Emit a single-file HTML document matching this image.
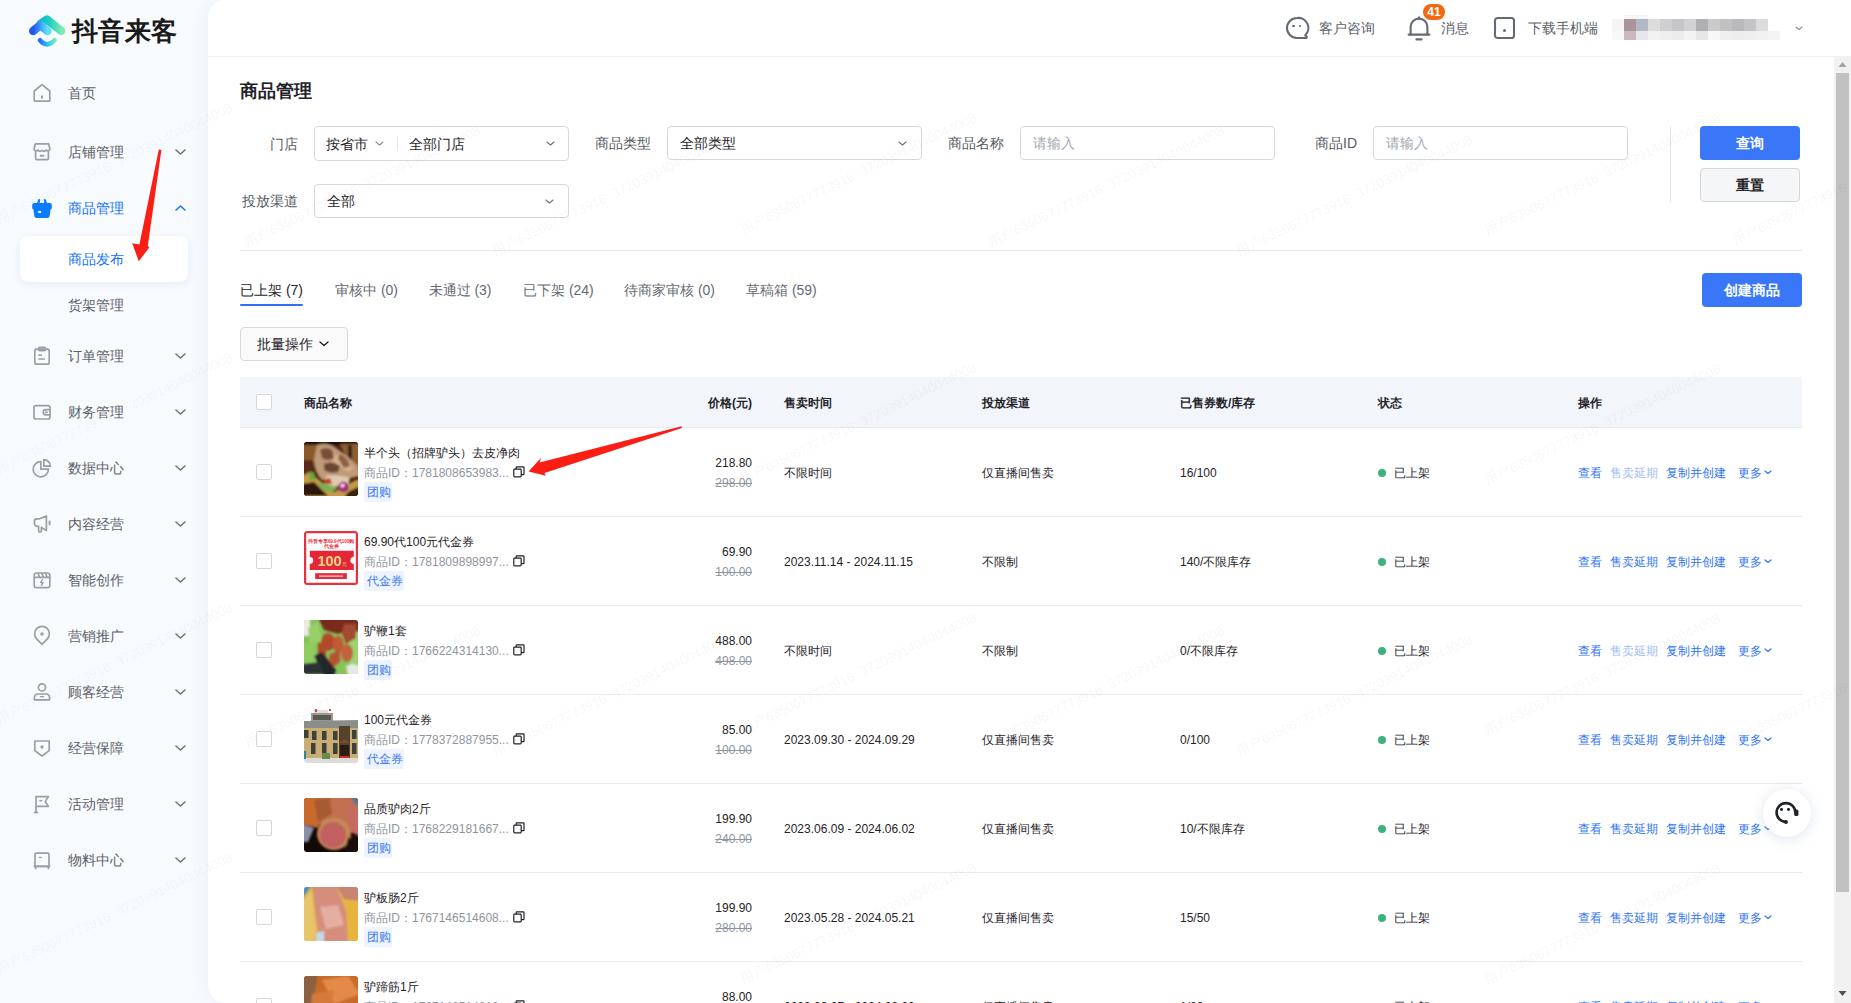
<!DOCTYPE html><html><head><meta charset="utf-8"><style>
*{margin:0;padding:0;box-sizing:border-box}
html,body{width:1851px;height:1003px;overflow:hidden}
body{position:relative;background:#f8fbfe;font-family:"Liberation Sans",sans-serif;color:#1f2329}
.t{position:absolute;white-space:nowrap}
.a{position:absolute}
#main{position:absolute;left:208px;top:0;width:1643px;height:1003px;background:#fff;border-radius:18px 0 0 18px;box-shadow:-4px 0 20px rgba(215,230,245,.3)}
</style></head><body>
<svg class="a" style="left:24px;top:10px" width="48" height="42" viewBox="24 10 48 42">
<defs>
<linearGradient id="lg1" x1="0" y1="0" x2="1" y2="0"><stop offset="0" stop-color="#12b8d0"/><stop offset=".45" stop-color="#20cfc0"/><stop offset="1" stop-color="#7de8b8"/></linearGradient>
<linearGradient id="lg2" x1="0" y1="0" x2="1" y2="0"><stop offset="0" stop-color="#1f55f0"/><stop offset=".5" stop-color="#3a9cff"/><stop offset="1" stop-color="#5ee0f5"/></linearGradient>
<linearGradient id="lg3" x1="0" y1="0" x2="1" y2="0"><stop offset="0" stop-color="#2a6cf8"/><stop offset=".55" stop-color="#33c2fa"/><stop offset="1" stop-color="#78e8bc"/></linearGradient>
</defs>
<path d="M40.5 24 L47 19.6 L61.2 30.8" fill="none" stroke="url(#lg1)" stroke-width="8.4" stroke-linecap="round" stroke-linejoin="round"/>
<path d="M33.2 31 L40.5 25 L47.5 31" fill="none" stroke="url(#lg2)" stroke-width="8.4" stroke-linecap="round" stroke-linejoin="round"/>
<path d="M40 40.3 Q47 48.5 54.5 40.3" fill="none" stroke="url(#lg3)" stroke-width="4.6" stroke-linecap="round"/>
</svg>
<div class="t" style="top:16.0px;font-size:26px;line-height:30px;color:#1a1a1a;font-weight:bold;left:72px;letter-spacing:0.3px;">抖音来客</div>
<div class="a" style="left:20px;top:236px;width:168px;height:46px;background:#fff;border-radius:8px;box-shadow:0 2px 8px rgba(180,200,225,.28)"></div>
<svg class="a" style="left:31px;top:82px" width="22" height="22" viewBox="0 0 22 22" fill="none" stroke="#9a9ea6" stroke-width="1.7" stroke-linecap="round" stroke-linejoin="round"><path d="M3.2 9 L11 2.6 L18.8 9 V18.2 a1 1 0 0 1-1 1 H4.2 a1 1 0 0 1-1-1 Z"/><path d="M11 14.2 v1.6" stroke-width="2"/></svg>
<div class="t" style="top:83.0px;font-size:14px;line-height:20px;color:#5c6169;left:68px;">首页</div>
<svg class="a" style="left:31px;top:141px" width="22" height="22" viewBox="0 0 22 22" fill="none" stroke="#9a9ea6" stroke-width="1.7" stroke-linecap="round" stroke-linejoin="round"><path d="M4.4 2.8 H17.6 L19 8 Q17.7 10.8 15.3 9.2 Q13.2 11.2 11 9.4 Q8.8 11.2 6.7 9.2 Q4.3 10.8 3 8 Z"/><path d="M4.6 10.6 V17.6 a1 1 0 0 0 1 1 H16.4 a1 1 0 0 0 1-1 V10.6"/><path d="M9.6 14.8 h2.8" stroke-width="2"/></svg>
<div class="t" style="top:142.0px;font-size:14px;line-height:20px;color:#5c6169;left:68px;">店铺管理</div>
<svg class="a" style="left:175.0px;top:149.0px" width="11" height="6.5"><path d="M1 1 L5.5 5.0 L10 1" fill="none" stroke="#6b7078" stroke-width="1.5" stroke-linecap="round" stroke-linejoin="round"/></svg>
<svg class="a" style="left:31px;top:197px" width="22" height="22" viewBox="0 0 22 22"><path fill="#0a7cff" d="M1.2 8 a2 2 0 0 1 2-2 H5.9 L7.3 2.6 a1 1 0 0 1 1.9 .5 L8.7 6 H13.3 L12.8 3.1 a1 1 0 0 1 1.9-.5 L16.1 6 H18.8 a2 2 0 0 1 2 2 V11.4 L19.6 12.6 L18.7 18.8 a2.4 2.4 0 0 1-2.4 2.2 H5.7 a2.4 2.4 0 0 1-2.4-2.2 L2.4 12.6 L1.2 11.4 Z"/><rect x="7" y="14" width="3.2" height="2" rx=".7" fill="#fff"/></svg>
<div class="t" style="top:198.0px;font-size:14px;line-height:20px;color:#1170ff;left:68px;">商品管理</div>
<svg class="a" style="left:175.0px;top:205.0px" width="11" height="6.5"><path d="M1 5.0 L5.5 1 L10 5.0" fill="none" stroke="#1170ff" stroke-width="1.5" stroke-linecap="round" stroke-linejoin="round"/></svg>
<div class="t" style="top:249.0px;font-size:14px;line-height:20px;color:#1170ff;left:68px;">商品发布</div>
<div class="t" style="top:295.0px;font-size:14px;line-height:20px;color:#5c6169;left:68px;">货架管理</div>
<svg class="a" style="left:31px;top:345px" width="22" height="22" viewBox="0 0 22 22" fill="none" stroke="#9a9ea6" stroke-width="1.7" stroke-linecap="round" stroke-linejoin="round"><rect x="3.8" y="4.2" width="14.4" height="15" rx="2"/><rect x="7.6" y="2.4" width="6.8" height="3.2" rx="1.2"/><path d="M8 10.2 h2.2 M8 14 h5.2"/></svg>
<div class="t" style="top:346.0px;font-size:14px;line-height:20px;color:#5c6169;left:68px;">订单管理</div>
<svg class="a" style="left:175.0px;top:353.0px" width="11" height="6.5"><path d="M1 1 L5.5 5.0 L10 1" fill="none" stroke="#6b7078" stroke-width="1.5" stroke-linecap="round" stroke-linejoin="round"/></svg>
<svg class="a" style="left:31px;top:401px" width="22" height="22" viewBox="0 0 22 22" fill="none" stroke="#9a9ea6" stroke-width="1.7" stroke-linecap="round" stroke-linejoin="round"><rect x="3" y="4.6" width="16" height="13.4" rx="2"/><path d="M19 8.6 h-4.2 a2.6 2.6 0 0 0 0 5.2 H19"/><path d="M15 11.2 h.8" stroke-width="2"/></svg>
<div class="t" style="top:402.0px;font-size:14px;line-height:20px;color:#5c6169;left:68px;">财务管理</div>
<svg class="a" style="left:175.0px;top:409.0px" width="11" height="6.5"><path d="M1 1 L5.5 5.0 L10 1" fill="none" stroke="#6b7078" stroke-width="1.5" stroke-linecap="round" stroke-linejoin="round"/></svg>
<svg class="a" style="left:31px;top:457px" width="22" height="22" viewBox="0 0 22 22" fill="none" stroke="#9a9ea6" stroke-width="1.7" stroke-linecap="round" stroke-linejoin="round"><path d="M9.8 4.6 A7.6 7.6 0 1 0 17.4 12.2 H9.8 Z"/><path d="M12.8 2.6 V9.2 H19.4 A6.8 6.8 0 0 0 12.8 2.6 Z"/></svg>
<div class="t" style="top:458.0px;font-size:14px;line-height:20px;color:#5c6169;left:68px;">数据中心</div>
<svg class="a" style="left:175.0px;top:465.0px" width="11" height="6.5"><path d="M1 1 L5.5 5.0 L10 1" fill="none" stroke="#6b7078" stroke-width="1.5" stroke-linecap="round" stroke-linejoin="round"/></svg>
<svg class="a" style="left:31px;top:513px" width="22" height="22" viewBox="0 0 22 22" fill="none" stroke="#9a9ea6" stroke-width="1.7" stroke-linecap="round" stroke-linejoin="round"><path d="M3.4 8.2 a2.4 2.4 0 0 1 2.4-2.4 H8.6 L15.4 3 V17.4 L10.4 14.4 V17.8 a1.4 1.4 0 0 1-2.8 0 V13.2 a3.2 3.2 0 0 1-4.2-3 Z"/><path d="M18.6 8.4 V11.6" stroke-width="1.9"/></svg>
<div class="t" style="top:514.0px;font-size:14px;line-height:20px;color:#5c6169;left:68px;">内容经营</div>
<svg class="a" style="left:175.0px;top:521.0px" width="11" height="6.5"><path d="M1 1 L5.5 5.0 L10 1" fill="none" stroke="#6b7078" stroke-width="1.5" stroke-linecap="round" stroke-linejoin="round"/></svg>
<svg class="a" style="left:31px;top:569px" width="22" height="22" viewBox="0 0 22 22" fill="none" stroke="#9a9ea6" stroke-width="1.7" stroke-linecap="round" stroke-linejoin="round"><rect x="3.2" y="4" width="15.6" height="14.6" rx="2.2"/><path d="M3.4 8.4 H18.6 M7 4.2 L8.6 8.2 M10.8 4.2 L12.4 8.2 M14.6 4.2 L16.2 8.2"/><path d="M11.6 10.4 L9.6 13.6 H12.2 L10.4 16.4" stroke-width="1.3"/></svg>
<div class="t" style="top:570.0px;font-size:14px;line-height:20px;color:#5c6169;left:68px;">智能创作</div>
<svg class="a" style="left:175.0px;top:577.0px" width="11" height="6.5"><path d="M1 1 L5.5 5.0 L10 1" fill="none" stroke="#6b7078" stroke-width="1.5" stroke-linecap="round" stroke-linejoin="round"/></svg>
<svg class="a" style="left:31px;top:625px" width="22" height="22" viewBox="0 0 22 22" fill="none" stroke="#9a9ea6" stroke-width="1.7" stroke-linecap="round" stroke-linejoin="round"><path d="M11 19.4 L5.6 13.8 A7.4 7.4 0 1 1 16.4 13.8 Z"/><circle cx="11" cy="9" r=".9" fill="#9a9ea6"/></svg>
<div class="t" style="top:626.0px;font-size:14px;line-height:20px;color:#5c6169;left:68px;">营销推广</div>
<svg class="a" style="left:175.0px;top:633.0px" width="11" height="6.5"><path d="M1 1 L5.5 5.0 L10 1" fill="none" stroke="#6b7078" stroke-width="1.5" stroke-linecap="round" stroke-linejoin="round"/></svg>
<svg class="a" style="left:31px;top:681px" width="22" height="22" viewBox="0 0 22 22" fill="none" stroke="#9a9ea6" stroke-width="1.7" stroke-linecap="round" stroke-linejoin="round"><circle cx="11" cy="6.4" r="3.6"/><path d="M3.4 18.8 V16.4 a3.4 3.4 0 0 1 3.4-3.4 H15.2 a3.4 3.4 0 0 1 3.4 3.4 V18.8 Z"/><path d="M9.4 15.6 h3.2" stroke-width="1.4"/></svg>
<div class="t" style="top:682.0px;font-size:14px;line-height:20px;color:#5c6169;left:68px;">顾客经营</div>
<svg class="a" style="left:175.0px;top:689.0px" width="11" height="6.5"><path d="M1 1 L5.5 5.0 L10 1" fill="none" stroke="#6b7078" stroke-width="1.5" stroke-linecap="round" stroke-linejoin="round"/></svg>
<svg class="a" style="left:31px;top:737px" width="22" height="22" viewBox="0 0 22 22" fill="none" stroke="#9a9ea6" stroke-width="1.7" stroke-linecap="round" stroke-linejoin="round"><path d="M3.8 4 H18.2 V13.6 L11 19 L3.8 13.6 Z"/><circle cx="11" cy="10" r=".8" fill="#9a9ea6"/></svg>
<div class="t" style="top:738.0px;font-size:14px;line-height:20px;color:#5c6169;left:68px;">经营保障</div>
<svg class="a" style="left:175.0px;top:745.0px" width="11" height="6.5"><path d="M1 1 L5.5 5.0 L10 1" fill="none" stroke="#6b7078" stroke-width="1.5" stroke-linecap="round" stroke-linejoin="round"/></svg>
<svg class="a" style="left:31px;top:793px" width="22" height="22" viewBox="0 0 22 22" fill="none" stroke="#9a9ea6" stroke-width="1.7" stroke-linecap="round" stroke-linejoin="round"><path d="M5 19.6 V3.6 H17.4 L14.2 8.6 L17.4 13.4 H5"/><path d="M3.6 19.4 h2.8"/><path d="M8.8 7.8 h1.8" stroke-width="1.4"/></svg>
<div class="t" style="top:794.0px;font-size:14px;line-height:20px;color:#5c6169;left:68px;">活动管理</div>
<svg class="a" style="left:175.0px;top:801.0px" width="11" height="6.5"><path d="M1 1 L5.5 5.0 L10 1" fill="none" stroke="#6b7078" stroke-width="1.5" stroke-linecap="round" stroke-linejoin="round"/></svg>
<svg class="a" style="left:31px;top:849px" width="22" height="22" viewBox="0 0 22 22" fill="none" stroke="#9a9ea6" stroke-width="1.7" stroke-linecap="round" stroke-linejoin="round"><path d="M4 17.4 V5.4 a1.2 1.2 0 0 1 1.2-1.2 H16.8 a1.2 1.2 0 0 1 1.2 1.2 V17.4 Z"/><path d="M4.6 17.6 V19.4 M17.4 17.6 V19.4 M3.4 17.4 H18.6"/><path d="M8.4 8.4 h2" stroke-width="1.4"/></svg>
<div class="t" style="top:850.0px;font-size:14px;line-height:20px;color:#5c6169;left:68px;">物料中心</div>
<svg class="a" style="left:175.0px;top:857.0px" width="11" height="6.5"><path d="M1 1 L5.5 5.0 L10 1" fill="none" stroke="#6b7078" stroke-width="1.5" stroke-linecap="round" stroke-linejoin="round"/></svg>
<div id="main"></div>
<div class="a" style="left:208px;top:56px;width:1643px;height:1px;background:#eef0f2"></div>
<svg class="a" style="left:1284px;top:15px" width="26" height="26" viewBox="0 0 26 26" fill="none" stroke="#646a73" stroke-width="2.1" stroke-linecap="round" stroke-linejoin="round">
<path d="M13 3 A10 10 0 1 0 13 23 H22.6 V21.6 L21.2 20.2 A10 10 0 0 0 13 3 Z"/></svg>
<div class="a" style="left:1292.4px;top:24.6px;width:2.6px;height:2.6px;border-radius:50%;background:#646a73"></div>
<div class="a" style="left:1298.8px;top:24.6px;width:2.6px;height:2.6px;border-radius:50%;background:#646a73"></div>
<div class="t" style="top:17.5px;font-size:14px;line-height:20px;color:#5c6169;left:1319px;">客户咨询</div>
<svg class="a" style="left:1406px;top:14px" width="26" height="28" viewBox="0 0 26 28" fill="none" stroke="#646a73" stroke-width="2.1" stroke-linecap="round" stroke-linejoin="round">
<path d="M4.6 20.4 V13 A8.4 8.4 0 0 1 21.4 13 V20.4"/><path d="M2.6 20.6 H23.4"/><path d="M10.4 25.4 H15.6"/><path d="M13 3.2 V4.2"/></svg>
<div class="a" style="left:1423px;top:4px;width:22px;height:16px;border-radius:8px;background:#f26a10;color:#fff;font-size:12px;line-height:16px;text-align:center;font-weight:bold">41</div>
<div class="t" style="top:17.5px;font-size:14px;line-height:20px;color:#5c6169;left:1441px;">消息</div>
<svg class="a" style="left:1492px;top:15px" width="25" height="26" viewBox="0 0 25 26" fill="none" stroke="#646a73" stroke-width="2.1" stroke-linejoin="round">
<rect x="3" y="3" width="19" height="20" rx="2.6"/></svg>
<div class="a" style="left:1503px;top:29.2px;width:3px;height:3px;border-radius:50%;background:#646a73"></div>
<div class="t" style="top:17.5px;font-size:14px;line-height:20px;color:#5c6169;left:1527.5px;">下载手机端</div>
<div class="a" style="left:1611.5px;top:19px;width:12px;height:12px;background:#f4f4f6"></div>
<div class="a" style="left:1623.5px;top:19px;width:12px;height:12px;background:#a8949a"></div>
<div class="a" style="left:1635.5px;top:19px;width:12px;height:12px;background:#b3b7c6"></div>
<div class="a" style="left:1647.5px;top:19px;width:12px;height:12px;background:#dcdcdc"></div>
<div class="a" style="left:1659.5px;top:19px;width:12px;height:12px;background:#cfcfd1"></div>
<div class="a" style="left:1671.5px;top:19px;width:12px;height:12px;background:#c6c6c8"></div>
<div class="a" style="left:1683.5px;top:19px;width:12px;height:12px;background:#d2d2d4"></div>
<div class="a" style="left:1695.5px;top:19px;width:12px;height:12px;background:#b0b0b2"></div>
<div class="a" style="left:1707.5px;top:19px;width:12px;height:12px;background:#cacacb"></div>
<div class="a" style="left:1719.5px;top:19px;width:12px;height:12px;background:#c1c1c3"></div>
<div class="a" style="left:1731.5px;top:19px;width:12px;height:12px;background:#b8b8bd"></div>
<div class="a" style="left:1743.5px;top:19px;width:12px;height:12px;background:#c4c4c7"></div>
<div class="a" style="left:1755.5px;top:19px;width:12px;height:12px;background:#dcdcdc"></div>
<div class="a" style="left:1611.5px;top:31px;width:12px;height:9px;background:#f8f8f9"></div>
<div class="a" style="left:1623.5px;top:31px;width:12px;height:9px;background:#c9b9bd"></div>
<div class="a" style="left:1635.5px;top:31px;width:12px;height:9px;background:#e7e6ec"></div>
<div class="a" style="left:1647.5px;top:31px;width:12px;height:9px;background:#f2f2f3"></div>
<div class="a" style="left:1659.5px;top:31px;width:12px;height:9px;background:#efefef"></div>
<div class="a" style="left:1671.5px;top:31px;width:12px;height:9px;background:#ececec"></div>
<div class="a" style="left:1683.5px;top:31px;width:12px;height:9px;background:#f3f3f3"></div>
<div class="a" style="left:1695.5px;top:31px;width:12px;height:9px;background:#e6e6e6"></div>
<div class="a" style="left:1707.5px;top:31px;width:12px;height:9px;background:#f7f7f7"></div>
<div class="a" style="left:1719.5px;top:31px;width:12px;height:9px;background:#efefef"></div>
<div class="a" style="left:1731.5px;top:31px;width:12px;height:9px;background:#ededed"></div>
<div class="a" style="left:1743.5px;top:31px;width:12px;height:9px;background:#efefef"></div>
<div class="a" style="left:1755.5px;top:31px;width:12px;height:9px;background:#f0f0f0"></div>
<div class="a" style="left:1767.5px;top:31px;width:12px;height:9px;background:#f4f4f4"></div>
<div class="a" style="left:1623.5px;top:14.5px;width:24px;height:4.5px;background:#f6f6f8"></div>
<svg class="a" style="left:1795.0px;top:26.25px" width="8" height="5.0"><path d="M1 1 L4.0 3.5 L7 1" fill="none" stroke="#8a8f96" stroke-width="1.1" stroke-linecap="round" stroke-linejoin="round"/></svg>
<div class="t" style="top:78.5px;font-size:18px;line-height:24px;color:#1f2329;font-weight:bold;left:240px;">商品管理</div>
<div class="t" style="top:133.5px;font-size:14px;line-height:20px;color:#555a62;right:1553px;">门店</div>
<div class="a" style="left:314px;top:126px;width:255px;height:35px;border:1px solid #d5d8dd;border-radius:4px;background:#fff;"></div>
<div class="t" style="top:133.5px;font-size:14px;line-height:20px;color:#1f2329;left:326px;">按省市</div>
<svg class="a" style="left:374.5px;top:141.0px" width="9" height="5.5"><path d="M1 1 L4.5 4.0 L8 1" fill="none" stroke="#8a8f96" stroke-width="1.1" stroke-linecap="round" stroke-linejoin="round"/></svg>
<div class="a" style="left:397px;top:136px;width:1px;height:15px;background:#e3e5e8"></div>
<div class="t" style="top:133.5px;font-size:14px;line-height:20px;color:#1f2329;left:409px;">全部门店</div>
<svg class="a" style="left:545.5px;top:141.0px" width="9" height="5.5"><path d="M1 1 L4.5 4.0 L8 1" fill="none" stroke="#6b7078" stroke-width="1.1" stroke-linecap="round" stroke-linejoin="round"/></svg>
<div class="t" style="top:133.0px;font-size:14px;line-height:20px;color:#555a62;right:1200px;">商品类型</div>
<div class="a" style="left:667px;top:126px;width:255px;height:34px;border:1px solid #d5d8dd;border-radius:4px;background:#fff;"></div>
<div class="t" style="top:133.0px;font-size:14px;line-height:20px;color:#1f2329;left:680px;">全部类型</div>
<svg class="a" style="left:897.5px;top:140.5px" width="9" height="5.5"><path d="M1 1 L4.5 4.0 L8 1" fill="none" stroke="#6b7078" stroke-width="1.1" stroke-linecap="round" stroke-linejoin="round"/></svg>
<div class="t" style="top:133.0px;font-size:14px;line-height:20px;color:#555a62;right:847px;">商品名称</div>
<div class="a" style="left:1020px;top:126px;width:255px;height:34px;border:1px solid #d5d8dd;border-radius:4px;background:#fff;"></div>
<div class="t" style="top:133.0px;font-size:14px;line-height:20px;color:#a3a8b0;left:1033px;">请输入</div>
<div class="t" style="top:133.0px;font-size:14px;line-height:20px;color:#555a62;right:494px;">商品ID</div>
<div class="a" style="left:1373px;top:126px;width:255px;height:34px;border:1px solid #d5d8dd;border-radius:4px;background:#fff;"></div>
<div class="t" style="top:133.0px;font-size:14px;line-height:20px;color:#a3a8b0;left:1386px;">请输入</div>
<div class="a" style="left:1670px;top:126px;width:1px;height:77px;background:#e5e7ea"></div>
<div class="a" style="left:1700px;top:126px;width:100px;height:34px;border-radius:4px;background:#3a77f8"></div>
<div class="t" style="top:133.0px;font-size:14px;line-height:20px;color:#fff;font-weight:600;left:1700.0px;width:100px;text-align:center;">查询</div>
<div class="a" style="left:1700px;top:168px;width:100px;height:34px;border-radius:4px;background:#f5f6f7;border:1px solid #d3d6da"></div>
<div class="t" style="top:175.0px;font-size:14px;line-height:20px;color:#1f2329;font-weight:600;left:1700.0px;width:100px;text-align:center;">重置</div>
<div class="t" style="top:191.0px;font-size:14px;line-height:20px;color:#555a62;right:1553px;">投放渠道</div>
<div class="a" style="left:314px;top:184px;width:255px;height:34px;border:1px solid #d5d8dd;border-radius:4px;background:#fff;"></div>
<div class="t" style="top:191.0px;font-size:14px;line-height:20px;color:#1f2329;left:327px;">全部</div>
<svg class="a" style="left:544.5px;top:198.5px" width="9" height="5.5"><path d="M1 1 L4.5 4.0 L8 1" fill="none" stroke="#6b7078" stroke-width="1.1" stroke-linecap="round" stroke-linejoin="round"/></svg>
<div class="a" style="left:240px;top:250px;width:1562px;height:1px;background:#e3e6ea"></div>
<div class="t" style="top:280.0px;font-size:14px;line-height:20px;color:#1f2329;left:240px;">已上架 (7)</div>
<div class="t" style="top:280.0px;font-size:14px;line-height:20px;color:#646a73;left:335px;">审核中 (0)</div>
<div class="t" style="top:280.0px;font-size:14px;line-height:20px;color:#646a73;left:428.5px;">未通过 (3)</div>
<div class="t" style="top:280.0px;font-size:14px;line-height:20px;color:#646a73;left:523px;">已下架 (24)</div>
<div class="t" style="top:280.0px;font-size:14px;line-height:20px;color:#646a73;left:624px;">待商家审核 (0)</div>
<div class="t" style="top:280.0px;font-size:14px;line-height:20px;color:#646a73;left:746px;">草稿箱 (59)</div>
<div class="a" style="left:240px;top:303.5px;width:63px;height:2.5px;background:#2f6ef5;border-radius:1px"></div>
<div class="a" style="left:1702px;top:273px;width:100px;height:34px;border-radius:4px;background:#3a77f8"></div>
<div class="t" style="top:280.0px;font-size:14px;line-height:20px;color:#fff;font-weight:600;left:1702.0px;width:100px;text-align:center;">创建商品</div>
<div class="a" style="left:240px;top:327px;width:108px;height:34px;border-radius:4px;background:#fafafa;border:1px solid #d8dadd"></div>
<div class="t" style="top:334.0px;font-size:14px;line-height:20px;color:#1f2329;left:257px;">批量操作</div>
<svg class="a" style="left:319.0px;top:341.25px" width="10" height="6.0"><path d="M1 1 L5.0 4.5 L9 1" fill="none" stroke="#1f2329" stroke-width="1.4" stroke-linecap="round" stroke-linejoin="round"/></svg>
<div class="a" style="left:240px;top:377px;width:1562px;height:51px;background:#f2f5fa"></div>
<div class="a" style="left:240px;top:427px;width:1562px;height:1px;background:#e6e9ee"></div>
<div class="a" style="left:256px;top:394px;width:16px;height:16px;border:1px solid #d3d6da;border-radius:2px;background:#fff"></div>
<div class="t" style="top:392.5px;font-size:12px;line-height:20px;color:#1f2329;font-weight:bold;left:304px;">商品名称</div>
<div class="t" style="top:392.5px;font-size:12px;line-height:20px;color:#1f2329;font-weight:bold;right:1099px;">价格(元)</div>
<div class="t" style="top:392.5px;font-size:12px;line-height:20px;color:#1f2329;font-weight:bold;left:784px;">售卖时间</div>
<div class="t" style="top:392.5px;font-size:12px;line-height:20px;color:#1f2329;font-weight:bold;left:982px;">投放渠道</div>
<div class="t" style="top:392.5px;font-size:12px;line-height:20px;color:#1f2329;font-weight:bold;left:1180px;">已售券数/库存</div>
<div class="t" style="top:392.5px;font-size:12px;line-height:20px;color:#1f2329;font-weight:bold;left:1378px;">状态</div>
<div class="t" style="top:392.5px;font-size:12px;line-height:20px;color:#1f2329;font-weight:bold;left:1578px;">操作</div>
<div class="a" style="left:256px;top:464px;width:16px;height:16px;border:1px solid #d3d6da;border-radius:2px;background:#fff"></div>
<div class="a" style="left:304px;top:442px;width:54px;height:54px;border-radius:3px;overflow:hidden"><svg width="54" height="54" viewBox="0 0 54 54" style="display:block"><defs><filter id="bhead" x="-20%" y="-20%" width="140%" height="140%"><feGaussianBlur stdDeviation="1.1"/></filter></defs><rect width="54" height="54" fill="#4a2812"/><g filter="url(#bhead)"><rect x="-2" y="-2" width="58" height="5" fill="#1e1008"/><path d="M-2 3 H14 L10 20 H-2 Z" fill="#8a5a2a"/><path d="M-2 18 H9 L8 40 L-2 42 Z" fill="#5a2a12"/><path d="M36 2 H56 V26 L44 20 Z" fill="#8c5e30"/><rect x="44" y="3" width="4" height="17" fill="#2a2018"/><path d="M13 3 Q24 0 32 6 Q44 14 54 24 L56 34 L46 36 Q30 40 18 38 Q10 30 10 18 Z" fill="#c09a78"/><path d="M30 12 Q42 16 50 26 L44 30 Q34 24 28 18 Z" fill="#d4b090"/><path d="M16 8 Q22 4 28 8 L30 16 Q24 20 18 16 Z" fill="#7a5038"/><path d="M20 22 Q28 18 36 24 L34 30 Q26 32 20 28 Z" fill="#6a4430"/><path d="M36 12 Q44 16 46 24 L40 26 Q36 20 34 16 Z" fill="#8a6040"/><path d="M-2 34 L6 30 L22 44 L30 50 L52 38 L56 38 V56 H-2 Z" fill="#c49a48"/><path d="M-2 42 L10 40 L24 54 H-2 Z" fill="#2e1608"/><path d="M44 50 L56 44 V56 H40 Z" fill="#3a2010"/><path d="M4 30 L10 30 L12 38 L6 38 Z" fill="#6aa840"/><path d="M14 42 L24 40 L34 46 L28 50 L18 48 Z" fill="#7ab050"/><path d="M22 34 Q30 32 46 36 L44 44 Q32 46 22 42 Z" fill="#e0cbb0"/><path d="M20 38 L26 36 L28 42 L22 42 Z" fill="#c83020"/></g><circle cx="39.5" cy="45" r="5" fill="#9a2e78" filter="url(#bhead)"/><circle cx="38.6" cy="43.6" r="2.4" fill="#eed8ea" filter="url(#bhead)"/></svg></div>
<div class="t" style="top:443.0px;font-size:12px;line-height:20px;color:#1f2329;left:364px;">半个头（招牌驴头）去皮净肉</div>
<div class="t" style="top:462.5px;font-size:12px;line-height:20px;color:#8f959e;left:364px;">商品ID：1781808653983...</div>
<svg class="a" style="left:513px;top:466px" width="12" height="12" viewBox="0 0 12 12" fill="none" stroke="#1f2329" stroke-width="1.2"><rect x="0.8" y="3.2" width="7.4" height="7.6" rx=".8"/><path d="M3.2 3.2 V1.4 a.6 .6 0 0 1 .6-.6 H10.4 a.6 .6 0 0 1 .6.6 V8 a.6 .6 0 0 1-.6.6 H8.2"/></svg>
<div class="a" style="left:364px;top:482px;width:28px;height:20px;background:#eef4ff;border-radius:2px"></div>
<div class="t" style="top:482.0px;font-size:12px;line-height:20px;color:#3a78f2;left:367px;">团购</div>
<div class="t" style="top:452.5px;font-size:12px;line-height:20px;color:#1f2329;right:1099px;">218.80</div>
<div class="t" style="top:472.5px;font-size:12px;line-height:20px;color:#8f959e;right:1099px;text-decoration:line-through;">298.00</div>
<div class="t" style="top:462.5px;font-size:12px;line-height:20px;color:#1f2329;left:784px;">不限时间</div>
<div class="t" style="top:462.5px;font-size:12px;line-height:20px;color:#1f2329;left:982px;">仅直播间售卖</div>
<div class="t" style="top:462.5px;font-size:12px;line-height:20px;color:#1f2329;left:1180px;">16/100</div>
<div class="a" style="left:1378px;top:468.5px;width:8px;height:8px;border-radius:50%;background:#3db37c"></div>
<div class="t" style="top:462.5px;font-size:12px;line-height:20px;color:#1f2329;left:1394px;">已上架</div>
<div class="t" style="top:462.5px;font-size:12px;line-height:20px;color:#2f74f6;left:1578px;">查看</div>
<div class="t" style="top:462.5px;font-size:12px;line-height:20px;color:#9fbdf8;left:1610px;">售卖延期</div>
<div class="t" style="top:462.5px;font-size:12px;line-height:20px;color:#2f74f6;left:1666px;">复制并创建</div>
<div class="t" style="top:462.5px;font-size:12px;line-height:20px;color:#2f74f6;left:1738px;">更多</div>
<svg class="a" style="left:1763.5px;top:470.25px" width="8" height="5.0"><path d="M1 1 L4.0 3.5 L7 1" fill="none" stroke="#2f74f6" stroke-width="1.2" stroke-linecap="round" stroke-linejoin="round"/></svg>
<div class="a" style="left:240px;top:516px;width:1562px;height:1px;background:#e8eaed"></div>
<div class="a" style="left:256px;top:553px;width:16px;height:16px;border:1px solid #d3d6da;border-radius:2px;background:#fff"></div>
<div class="a" style="left:304px;top:531px;width:54px;height:54px;border-radius:3px;overflow:hidden"><svg width="54" height="54" viewBox="0 0 54 54" style="display:block"><defs><filter id="bcoupon" x="-20%" y="-20%" width="140%" height="140%"><feGaussianBlur stdDeviation="1.1"/></filter></defs><rect width="54" height="54" fill="#fff"/><rect x="1.1" y="1.1" width="51.8" height="51.8" rx="1.5" fill="none" stroke="#e8303e" stroke-width="2.2"/><text x="27" y="11.6" font-family="Liberation Sans" font-weight="bold" font-size="4.6" fill="#e8303e" text-anchor="middle">抖音专享69.9代100购</text><text x="27" y="16.8" font-family="Liberation Sans" font-weight="bold" font-size="4.6" fill="#e8303e" text-anchor="middle">代金券</text><path d="M5.8 19.8 H49.8 V26 a3.4 3.4 0 0 0 0 6.8 V39 H5.8 V32.8 a3.4 3.4 0 0 0 0-6.8 Z" fill="#e42636"/><text x="25.5" y="34.8" font-family="Liberation Sans" font-weight="bold" font-size="14.5" fill="#f2d48a" text-anchor="middle">100</text><text x="38" y="35" font-family="Liberation Sans" font-size="5" fill="#f2d48a">元</text><rect x="11.2" y="42.2" width="31.6" height="5.8" fill="#e42636"/><rect x="15" y="44.3" width="24" height="1.8" fill="#f4a8b0"/></svg></div>
<div class="t" style="top:532.0px;font-size:12px;line-height:20px;color:#1f2329;left:364px;">69.90代100元代金券</div>
<div class="t" style="top:551.5px;font-size:12px;line-height:20px;color:#8f959e;left:364px;">商品ID：1781809898997...</div>
<svg class="a" style="left:513px;top:555px" width="12" height="12" viewBox="0 0 12 12" fill="none" stroke="#1f2329" stroke-width="1.2"><rect x="0.8" y="3.2" width="7.4" height="7.6" rx=".8"/><path d="M3.2 3.2 V1.4 a.6 .6 0 0 1 .6-.6 H10.4 a.6 .6 0 0 1 .6.6 V8 a.6 .6 0 0 1-.6.6 H8.2"/></svg>
<div class="a" style="left:364px;top:571px;width:40px;height:20px;background:#eef4ff;border-radius:2px"></div>
<div class="t" style="top:571.0px;font-size:12px;line-height:20px;color:#3a78f2;left:367px;">代金券</div>
<div class="t" style="top:541.5px;font-size:12px;line-height:20px;color:#1f2329;right:1099px;">69.90</div>
<div class="t" style="top:561.5px;font-size:12px;line-height:20px;color:#8f959e;right:1099px;text-decoration:line-through;">100.00</div>
<div class="t" style="top:551.5px;font-size:12px;line-height:20px;color:#1f2329;left:784px;">2023.11.14 - 2024.11.15</div>
<div class="t" style="top:551.5px;font-size:12px;line-height:20px;color:#1f2329;left:982px;">不限制</div>
<div class="t" style="top:551.5px;font-size:12px;line-height:20px;color:#1f2329;left:1180px;">140/不限库存</div>
<div class="a" style="left:1378px;top:557.5px;width:8px;height:8px;border-radius:50%;background:#3db37c"></div>
<div class="t" style="top:551.5px;font-size:12px;line-height:20px;color:#1f2329;left:1394px;">已上架</div>
<div class="t" style="top:551.5px;font-size:12px;line-height:20px;color:#2f74f6;left:1578px;">查看</div>
<div class="t" style="top:551.5px;font-size:12px;line-height:20px;color:#2f74f6;left:1610px;">售卖延期</div>
<div class="t" style="top:551.5px;font-size:12px;line-height:20px;color:#2f74f6;left:1666px;">复制并创建</div>
<div class="t" style="top:551.5px;font-size:12px;line-height:20px;color:#2f74f6;left:1738px;">更多</div>
<svg class="a" style="left:1763.5px;top:559.25px" width="8" height="5.0"><path d="M1 1 L4.0 3.5 L7 1" fill="none" stroke="#2f74f6" stroke-width="1.2" stroke-linecap="round" stroke-linejoin="round"/></svg>
<div class="a" style="left:240px;top:605px;width:1562px;height:1px;background:#e8eaed"></div>
<div class="a" style="left:256px;top:642px;width:16px;height:16px;border:1px solid #d3d6da;border-radius:2px;background:#fff"></div>
<div class="a" style="left:304px;top:620px;width:54px;height:54px;border-radius:3px;overflow:hidden"><svg width="54" height="54" viewBox="0 0 54 54" style="display:block"><defs><filter id="blettuce" x="-20%" y="-20%" width="140%" height="140%"><feGaussianBlur stdDeviation="1.1"/></filter></defs><rect width="54" height="54" fill="#86c45a"/><g filter="url(#blettuce)"><rect x="-2" y="-2" width="8" height="18" fill="#eeeae6"/><path d="M4 8 L14 2 L18 20 L6 26 Z" fill="#98d068"/><path d="M-2 24 L10 22 L12 44 L-2 46 Z" fill="#90cc60"/><path d="M44 14 L56 10 V56 H46 Z" fill="#9ad470"/><path d="M14 -2 H56 V12 L46 10 L34 14 L20 10 Z" fill="#7a2c1a"/><path d="M40 4 L52 4 L52 18 L42 24 L38 14 Z" fill="#a44a30"/><ellipse cx="24" cy="22" rx="7" ry="9" fill="#b24a2a"/><ellipse cx="34" cy="24" rx="5.5" ry="8" fill="#c05a32"/><ellipse cx="43" cy="33" rx="6" ry="9" fill="#c2623c"/><path d="M14 22 L22 26 L22 38 L14 36 Z" fill="#b04a28"/><path d="M26 34 L36 30 L36 42 L28 48 L24 44 Z" fill="#b85232"/><path d="M10 36 L18 32 L32 50 L30 56 L20 56 Z" fill="#24282c"/><path d="M-2 44 L16 42 L20 54 L-2 54 Z" fill="#2a3234"/><path d="M42 46 L48 44 L56 46 V56 H44 Z" fill="#e8e8e2"/></g></svg></div>
<div class="t" style="top:621.0px;font-size:12px;line-height:20px;color:#1f2329;left:364px;">驴鞭1套</div>
<div class="t" style="top:640.5px;font-size:12px;line-height:20px;color:#8f959e;left:364px;">商品ID：1766224314130...</div>
<svg class="a" style="left:513px;top:644px" width="12" height="12" viewBox="0 0 12 12" fill="none" stroke="#1f2329" stroke-width="1.2"><rect x="0.8" y="3.2" width="7.4" height="7.6" rx=".8"/><path d="M3.2 3.2 V1.4 a.6 .6 0 0 1 .6-.6 H10.4 a.6 .6 0 0 1 .6.6 V8 a.6 .6 0 0 1-.6.6 H8.2"/></svg>
<div class="a" style="left:364px;top:660px;width:28px;height:20px;background:#eef4ff;border-radius:2px"></div>
<div class="t" style="top:660.0px;font-size:12px;line-height:20px;color:#3a78f2;left:367px;">团购</div>
<div class="t" style="top:630.5px;font-size:12px;line-height:20px;color:#1f2329;right:1099px;">488.00</div>
<div class="t" style="top:650.5px;font-size:12px;line-height:20px;color:#8f959e;right:1099px;text-decoration:line-through;">498.00</div>
<div class="t" style="top:640.5px;font-size:12px;line-height:20px;color:#1f2329;left:784px;">不限时间</div>
<div class="t" style="top:640.5px;font-size:12px;line-height:20px;color:#1f2329;left:982px;">不限制</div>
<div class="t" style="top:640.5px;font-size:12px;line-height:20px;color:#1f2329;left:1180px;">0/不限库存</div>
<div class="a" style="left:1378px;top:646.5px;width:8px;height:8px;border-radius:50%;background:#3db37c"></div>
<div class="t" style="top:640.5px;font-size:12px;line-height:20px;color:#1f2329;left:1394px;">已上架</div>
<div class="t" style="top:640.5px;font-size:12px;line-height:20px;color:#2f74f6;left:1578px;">查看</div>
<div class="t" style="top:640.5px;font-size:12px;line-height:20px;color:#9fbdf8;left:1610px;">售卖延期</div>
<div class="t" style="top:640.5px;font-size:12px;line-height:20px;color:#2f74f6;left:1666px;">复制并创建</div>
<div class="t" style="top:640.5px;font-size:12px;line-height:20px;color:#2f74f6;left:1738px;">更多</div>
<svg class="a" style="left:1763.5px;top:648.25px" width="8" height="5.0"><path d="M1 1 L4.0 3.5 L7 1" fill="none" stroke="#2f74f6" stroke-width="1.2" stroke-linecap="round" stroke-linejoin="round"/></svg>
<div class="a" style="left:240px;top:694px;width:1562px;height:1px;background:#e8eaed"></div>
<div class="a" style="left:256px;top:731px;width:16px;height:16px;border:1px solid #d3d6da;border-radius:2px;background:#fff"></div>
<div class="a" style="left:304px;top:709px;width:54px;height:54px;border-radius:3px;overflow:hidden"><svg width="54" height="54" viewBox="0 0 54 54" style="display:block"><defs><filter id="bbuilding" x="-20%" y="-20%" width="140%" height="140%"><feGaussianBlur stdDeviation="1.1"/></filter></defs><rect width="54" height="54" fill="#fff"/><rect x="7" y="4" width="22" height="10" fill="#9a9a90"/><rect x="9" y="6" width="18" height="5" fill="#5a5a50"/><rect x="10" y="1" width="14" height="3" fill="#dcdce4"/><rect x="11" y="0" width="2" height="3" fill="#e04050"/><rect x="25" y="0" width="2" height="2" fill="#e04050"/><path d="M0 12 L54 11 V19 H0 Z" fill="#8a8e88"/><rect x="0" y="19" width="54" height="31" fill="#c8ae74"/><rect x="35" y="17" width="11" height="33" fill="#54422e"/><path d="M35 34 L40.5 30 L46 34 Z" fill="#7a4a2a"/><rect x="36" y="36" width="9" height="13" fill="#2a1c12"/><rect x="36" y="47" width="9" height="2.5" fill="#d82a2a"/><rect x="0" y="21" width="4.5" height="8" fill="#40403a"/><rect x="8" y="22" width="4.5" height="9" fill="#40403a"/><rect x="18" y="22" width="4.5" height="9" fill="#40403a"/><rect x="29" y="22" width="4.5" height="9" fill="#40403a"/><rect x="48" y="21" width="4.5" height="9" fill="#40403a"/><rect x="7" y="34" width="4.5" height="11" fill="#40403a"/><rect x="18" y="34" width="4.5" height="11" fill="#40403a"/><rect x="29" y="34" width="4.5" height="11" fill="#40403a"/><rect x="48" y="34" width="4.5" height="11" fill="#40403a"/><rect x="0" y="49" width="54" height="5" fill="#dcdcd8"/><rect x="18" y="44" width="8" height="6" fill="#6a8a50"/><rect x="0" y="42" width="2" height="8" fill="#2a8a90"/></svg></div>
<div class="t" style="top:710.0px;font-size:12px;line-height:20px;color:#1f2329;left:364px;">100元代金券</div>
<div class="t" style="top:729.5px;font-size:12px;line-height:20px;color:#8f959e;left:364px;">商品ID：1778372887955...</div>
<svg class="a" style="left:513px;top:733px" width="12" height="12" viewBox="0 0 12 12" fill="none" stroke="#1f2329" stroke-width="1.2"><rect x="0.8" y="3.2" width="7.4" height="7.6" rx=".8"/><path d="M3.2 3.2 V1.4 a.6 .6 0 0 1 .6-.6 H10.4 a.6 .6 0 0 1 .6.6 V8 a.6 .6 0 0 1-.6.6 H8.2"/></svg>
<div class="a" style="left:364px;top:749px;width:40px;height:20px;background:#eef4ff;border-radius:2px"></div>
<div class="t" style="top:749.0px;font-size:12px;line-height:20px;color:#3a78f2;left:367px;">代金券</div>
<div class="t" style="top:719.5px;font-size:12px;line-height:20px;color:#1f2329;right:1099px;">85.00</div>
<div class="t" style="top:739.5px;font-size:12px;line-height:20px;color:#8f959e;right:1099px;text-decoration:line-through;">100.00</div>
<div class="t" style="top:729.5px;font-size:12px;line-height:20px;color:#1f2329;left:784px;">2023.09.30 - 2024.09.29</div>
<div class="t" style="top:729.5px;font-size:12px;line-height:20px;color:#1f2329;left:982px;">仅直播间售卖</div>
<div class="t" style="top:729.5px;font-size:12px;line-height:20px;color:#1f2329;left:1180px;">0/100</div>
<div class="a" style="left:1378px;top:735.5px;width:8px;height:8px;border-radius:50%;background:#3db37c"></div>
<div class="t" style="top:729.5px;font-size:12px;line-height:20px;color:#1f2329;left:1394px;">已上架</div>
<div class="t" style="top:729.5px;font-size:12px;line-height:20px;color:#2f74f6;left:1578px;">查看</div>
<div class="t" style="top:729.5px;font-size:12px;line-height:20px;color:#2f74f6;left:1610px;">售卖延期</div>
<div class="t" style="top:729.5px;font-size:12px;line-height:20px;color:#2f74f6;left:1666px;">复制并创建</div>
<div class="t" style="top:729.5px;font-size:12px;line-height:20px;color:#2f74f6;left:1738px;">更多</div>
<svg class="a" style="left:1763.5px;top:737.25px" width="8" height="5.0"><path d="M1 1 L4.0 3.5 L7 1" fill="none" stroke="#2f74f6" stroke-width="1.2" stroke-linecap="round" stroke-linejoin="round"/></svg>
<div class="a" style="left:240px;top:783px;width:1562px;height:1px;background:#e8eaed"></div>
<div class="a" style="left:256px;top:820px;width:16px;height:16px;border:1px solid #d3d6da;border-radius:2px;background:#fff"></div>
<div class="a" style="left:304px;top:798px;width:54px;height:54px;border-radius:3px;overflow:hidden"><svg width="54" height="54" viewBox="0 0 54 54" style="display:block"><defs><filter id="bbeef" x="-20%" y="-20%" width="140%" height="140%"><feGaussianBlur stdDeviation="1.1"/></filter></defs><rect width="54" height="54" fill="#120806"/><g filter="url(#bbeef)"><path d="M-2 -2 H56 V36 L42 30 L12 26 L-2 24 Z" fill="#c27050"/><path d="M-2 -2 H16 L20 12 L14 30 L-2 26 Z" fill="#c86a2e"/><path d="M10 2 L26 0 L28 16 L14 24 Z" fill="#a85a30"/><path d="M46 -2 H56 V8 L50 6 Z" fill="#6a7288"/><path d="M-2 26 L10 30 L4 44 L-2 44 Z" fill="#8a90a8"/><ellipse cx="30" cy="36" rx="17" ry="16" fill="#c48a54"/><ellipse cx="29" cy="37" rx="13" ry="13" fill="#c26060"/><path d="M44 8 L56 12 V38 L46 34 Z" fill="#c66a62"/><path d="M44 40 L56 38 V56 H40 Z" fill="#1a0c08"/></g></svg></div>
<div class="t" style="top:799.0px;font-size:12px;line-height:20px;color:#1f2329;left:364px;">品质驴肉2斤</div>
<div class="t" style="top:818.5px;font-size:12px;line-height:20px;color:#8f959e;left:364px;">商品ID：1768229181667...</div>
<svg class="a" style="left:513px;top:822px" width="12" height="12" viewBox="0 0 12 12" fill="none" stroke="#1f2329" stroke-width="1.2"><rect x="0.8" y="3.2" width="7.4" height="7.6" rx=".8"/><path d="M3.2 3.2 V1.4 a.6 .6 0 0 1 .6-.6 H10.4 a.6 .6 0 0 1 .6.6 V8 a.6 .6 0 0 1-.6.6 H8.2"/></svg>
<div class="a" style="left:364px;top:838px;width:28px;height:20px;background:#eef4ff;border-radius:2px"></div>
<div class="t" style="top:838.0px;font-size:12px;line-height:20px;color:#3a78f2;left:367px;">团购</div>
<div class="t" style="top:808.5px;font-size:12px;line-height:20px;color:#1f2329;right:1099px;">199.90</div>
<div class="t" style="top:828.5px;font-size:12px;line-height:20px;color:#8f959e;right:1099px;text-decoration:line-through;">240.00</div>
<div class="t" style="top:818.5px;font-size:12px;line-height:20px;color:#1f2329;left:784px;">2023.06.09 - 2024.06.02</div>
<div class="t" style="top:818.5px;font-size:12px;line-height:20px;color:#1f2329;left:982px;">仅直播间售卖</div>
<div class="t" style="top:818.5px;font-size:12px;line-height:20px;color:#1f2329;left:1180px;">10/不限库存</div>
<div class="a" style="left:1378px;top:824.5px;width:8px;height:8px;border-radius:50%;background:#3db37c"></div>
<div class="t" style="top:818.5px;font-size:12px;line-height:20px;color:#1f2329;left:1394px;">已上架</div>
<div class="t" style="top:818.5px;font-size:12px;line-height:20px;color:#2f74f6;left:1578px;">查看</div>
<div class="t" style="top:818.5px;font-size:12px;line-height:20px;color:#2f74f6;left:1610px;">售卖延期</div>
<div class="t" style="top:818.5px;font-size:12px;line-height:20px;color:#2f74f6;left:1666px;">复制并创建</div>
<div class="t" style="top:818.5px;font-size:12px;line-height:20px;color:#2f74f6;left:1738px;">更多</div>
<svg class="a" style="left:1763.5px;top:826.25px" width="8" height="5.0"><path d="M1 1 L4.0 3.5 L7 1" fill="none" stroke="#2f74f6" stroke-width="1.2" stroke-linecap="round" stroke-linejoin="round"/></svg>
<div class="a" style="left:240px;top:872px;width:1562px;height:1px;background:#e8eaed"></div>
<div class="a" style="left:256px;top:909px;width:16px;height:16px;border:1px solid #d3d6da;border-radius:2px;background:#fff"></div>
<div class="a" style="left:304px;top:887px;width:54px;height:54px;border-radius:3px;overflow:hidden"><svg width="54" height="54" viewBox="0 0 54 54" style="display:block"><defs><filter id="bslice" x="-20%" y="-20%" width="140%" height="140%"><feGaussianBlur stdDeviation="1.1"/></filter></defs><rect width="54" height="54" fill="#e6b444"/><g filter="url(#bslice)"><path d="M-2 -2 L8 -2 L-2 12 Z" fill="#4a90c0"/><path d="M-2 14 L8 4 L12 40 L10 56 H-2 Z" fill="#e8c46a"/><path d="M8 -2 L32 -2 L42 24 L44 56 L16 56 L12 32 Z" fill="#d68e7c"/><path d="M16 20 L34 18 L40 38 L22 42 Z" fill="#e4aea0"/><path d="M32 -2 L56 -2 V14 L40 12 Z" fill="#c88470"/><path d="M44 14 L56 14 V56 H44 Z" fill="#e8b440"/><path d="M12 46 L20 44 L20 56 L12 56 Z" fill="#c4d8ec"/></g></svg></div>
<div class="t" style="top:888.0px;font-size:12px;line-height:20px;color:#1f2329;left:364px;">驴板肠2斤</div>
<div class="t" style="top:907.5px;font-size:12px;line-height:20px;color:#8f959e;left:364px;">商品ID：1767146514608...</div>
<svg class="a" style="left:513px;top:911px" width="12" height="12" viewBox="0 0 12 12" fill="none" stroke="#1f2329" stroke-width="1.2"><rect x="0.8" y="3.2" width="7.4" height="7.6" rx=".8"/><path d="M3.2 3.2 V1.4 a.6 .6 0 0 1 .6-.6 H10.4 a.6 .6 0 0 1 .6.6 V8 a.6 .6 0 0 1-.6.6 H8.2"/></svg>
<div class="a" style="left:364px;top:927px;width:28px;height:20px;background:#eef4ff;border-radius:2px"></div>
<div class="t" style="top:927.0px;font-size:12px;line-height:20px;color:#3a78f2;left:367px;">团购</div>
<div class="t" style="top:897.5px;font-size:12px;line-height:20px;color:#1f2329;right:1099px;">199.90</div>
<div class="t" style="top:917.5px;font-size:12px;line-height:20px;color:#8f959e;right:1099px;text-decoration:line-through;">280.00</div>
<div class="t" style="top:907.5px;font-size:12px;line-height:20px;color:#1f2329;left:784px;">2023.05.28 - 2024.05.21</div>
<div class="t" style="top:907.5px;font-size:12px;line-height:20px;color:#1f2329;left:982px;">仅直播间售卖</div>
<div class="t" style="top:907.5px;font-size:12px;line-height:20px;color:#1f2329;left:1180px;">15/50</div>
<div class="a" style="left:1378px;top:913.5px;width:8px;height:8px;border-radius:50%;background:#3db37c"></div>
<div class="t" style="top:907.5px;font-size:12px;line-height:20px;color:#1f2329;left:1394px;">已上架</div>
<div class="t" style="top:907.5px;font-size:12px;line-height:20px;color:#2f74f6;left:1578px;">查看</div>
<div class="t" style="top:907.5px;font-size:12px;line-height:20px;color:#2f74f6;left:1610px;">售卖延期</div>
<div class="t" style="top:907.5px;font-size:12px;line-height:20px;color:#2f74f6;left:1666px;">复制并创建</div>
<div class="t" style="top:907.5px;font-size:12px;line-height:20px;color:#2f74f6;left:1738px;">更多</div>
<svg class="a" style="left:1763.5px;top:915.25px" width="8" height="5.0"><path d="M1 1 L4.0 3.5 L7 1" fill="none" stroke="#2f74f6" stroke-width="1.2" stroke-linecap="round" stroke-linejoin="round"/></svg>
<div class="a" style="left:240px;top:961px;width:1562px;height:1px;background:#e8eaed"></div>
<div class="a" style="left:256px;top:998px;width:16px;height:16px;border:1px solid #d3d6da;border-radius:2px;background:#fff"></div>
<div class="a" style="left:304px;top:976px;width:54px;height:54px;border-radius:3px;overflow:hidden"><svg width="54" height="54" viewBox="0 0 54 54" style="display:block"><defs><filter id="btendon" x="-20%" y="-20%" width="140%" height="140%"><feGaussianBlur stdDeviation="1.1"/></filter></defs><rect width="54" height="54" fill="#c86a2a"/><g filter="url(#btendon)"><path d="M-2 -2 L14 -2 L8 30 L-2 34 Z" fill="#8a6040"/><path d="M18 4 L44 0 L56 18 L30 28 Z" fill="#e48a48"/><path d="M8 18 L30 14 L26 40 L6 44 Z" fill="#d47a3a"/></g></svg></div>
<div class="t" style="top:977.0px;font-size:12px;line-height:20px;color:#1f2329;left:364px;">驴蹄筋1斤</div>
<div class="t" style="top:996.5px;font-size:12px;line-height:20px;color:#8f959e;left:364px;">商品ID：1767146514612...</div>
<svg class="a" style="left:513px;top:1000px" width="12" height="12" viewBox="0 0 12 12" fill="none" stroke="#1f2329" stroke-width="1.2"><rect x="0.8" y="3.2" width="7.4" height="7.6" rx=".8"/><path d="M3.2 3.2 V1.4 a.6 .6 0 0 1 .6-.6 H10.4 a.6 .6 0 0 1 .6.6 V8 a.6 .6 0 0 1-.6.6 H8.2"/></svg>
<div class="a" style="left:364px;top:1016px;width:28px;height:20px;background:#eef4ff;border-radius:2px"></div>
<div class="t" style="top:1016.0px;font-size:12px;line-height:20px;color:#3a78f2;left:367px;">团购</div>
<div class="t" style="top:986.5px;font-size:12px;line-height:20px;color:#1f2329;right:1099px;">88.00</div>
<div class="t" style="top:1006.5px;font-size:12px;line-height:20px;color:#8f959e;right:1099px;text-decoration:line-through;">98.00</div>
<div class="t" style="top:996.5px;font-size:12px;line-height:20px;color:#1f2329;left:784px;">2023.03.27 - 2024.03.20</div>
<div class="t" style="top:996.5px;font-size:12px;line-height:20px;color:#1f2329;left:982px;">仅直播间售卖</div>
<div class="t" style="top:996.5px;font-size:12px;line-height:20px;color:#1f2329;left:1180px;">1/20</div>
<div class="a" style="left:1378px;top:1002.5px;width:8px;height:8px;border-radius:50%;background:#3db37c"></div>
<div class="t" style="top:996.5px;font-size:12px;line-height:20px;color:#1f2329;left:1394px;">已上架</div>
<div class="t" style="top:996.5px;font-size:12px;line-height:20px;color:#2f74f6;left:1578px;">查看</div>
<div class="t" style="top:996.5px;font-size:12px;line-height:20px;color:#2f74f6;left:1610px;">售卖延期</div>
<div class="t" style="top:996.5px;font-size:12px;line-height:20px;color:#2f74f6;left:1666px;">复制并创建</div>
<div class="t" style="top:996.5px;font-size:12px;line-height:20px;color:#2f74f6;left:1738px;">更多</div>
<svg class="a" style="left:1763.5px;top:1004.25px" width="8" height="5.0"><path d="M1 1 L4.0 3.5 L7 1" fill="none" stroke="#2f74f6" stroke-width="1.2" stroke-linecap="round" stroke-linejoin="round"/></svg>
<div class="a" style="left:240px;top:1050px;width:1562px;height:1px;background:#e8eaed"></div>
<div class="a" style="left:1834px;top:57px;width:17px;height:946px;background:#f1f1f1"></div>
<div class="a" style="left:1836px;top:73px;width:13px;height:819px;background:#c1c1c1"></div>
<svg class="a" style="left:1838px;top:60px" width="9" height="8"><path d="M0.5 7 L4.5 2 L8.5 7 Z" fill="#a3a3a3"/></svg>
<svg class="a" style="left:1838px;top:990px" width="9" height="8"><path d="M0.5 1 L4.5 6 L8.5 1 Z" fill="#505050"/></svg>
<div class="a" style="left:1763px;top:789px;width:48px;height:48px;border-radius:50%;background:#fff;box-shadow:0 2px 14px rgba(160,180,210,.35)"></div>
<svg class="a" style="left:1770px;top:796px" width="32" height="32" viewBox="1770 796 32 32" fill="none" stroke="#1f2329" stroke-width="2.6" stroke-linecap="round">
<path d="M1786 821.9 A9.4 9.4 0 1 1 1795.4 812.5"/><rect x="1794.2" y="809.6" width="4.2" height="6.4" rx="1.6" fill="#1f2329" stroke="none"/><circle cx="1786" cy="822" r="1.9" fill="#1f2329" stroke="none"/></svg>
<div class="a" style="left:1780px;top:808.2px;width:2.6px;height:2.8px;border-radius:50%;background:#1f2329"></div>
<div class="a" style="left:1787.2px;top:808.2px;width:2.6px;height:2.8px;border-radius:50%;background:#1f2329"></div>
<svg class="a" style="left:0;top:0" width="1851" height="1003" viewBox="0 0 1851 1003">
<path d="M158.8 149.4 L161.4 149.9 L147.8 246 L149.4 247.3 L138.8 261.3 L132.2 243.3 L139.4 244.4 Z" fill="#fa1e14"/>
<path d="M681.6 426.3 L539.6 462.4 L541.1 457.8 L528.6 471.4 L545.9 475.8 L544.5 473 L681.9 427.9 Z" fill="#fa1e14"/>
</svg>
<div class="t" style="left:-0.30000000000001137px;top:-37px;font-size:13.5px;line-height:14px;color:rgba(60,60,60,.055);transform-origin:0 100%;transform:rotate(-25.8deg)">用户6350677773916: 37203914040044008</div>
<div class="t" style="left:-0.30000000000001137px;top:213px;font-size:13.5px;line-height:14px;color:rgba(60,60,60,.055);transform-origin:0 100%;transform:rotate(-25.8deg)">用户6350677773916: 37203914040044008</div>
<div class="t" style="left:-0.30000000000001137px;top:463px;font-size:13.5px;line-height:14px;color:rgba(60,60,60,.055);transform-origin:0 100%;transform:rotate(-25.8deg)">用户6350677773916: 37203914040044008</div>
<div class="t" style="left:-0.30000000000001137px;top:713px;font-size:13.5px;line-height:14px;color:rgba(60,60,60,.055);transform-origin:0 100%;transform:rotate(-25.8deg)">用户6350677773916: 37203914040044008</div>
<div class="t" style="left:-0.30000000000001137px;top:963px;font-size:13.5px;line-height:14px;color:rgba(60,60,60,.055);transform-origin:0 100%;transform:rotate(-25.8deg)">用户6350677773916: 37203914040044008</div>
<div class="t" style="left:-0.30000000000001137px;top:1213px;font-size:13.5px;line-height:14px;color:rgba(60,60,60,.055);transform-origin:0 100%;transform:rotate(-25.8deg)">用户6350677773916: 37203914040044008</div>
<div class="t" style="left:247.7px;top:235.7px;font-size:13.5px;line-height:14px;color:rgba(60,60,60,.055);transform-origin:0 100%;transform:rotate(-25.8deg)">用户6350677773916: 37203914040044008</div>
<div class="t" style="left:247.7px;top:735.7px;font-size:13.5px;line-height:14px;color:rgba(60,60,60,.055);transform-origin:0 100%;transform:rotate(-25.8deg)">用户6350677773916: 37203914040044008</div>
<div class="t" style="left:247.7px;top:1235.7px;font-size:13.5px;line-height:14px;color:rgba(60,60,60,.055);transform-origin:0 100%;transform:rotate(-25.8deg)">用户6350677773916: 37203914040044008</div>
<div class="t" style="left:495.7px;top:244.5px;font-size:13.5px;line-height:14px;color:rgba(60,60,60,.055);transform-origin:0 100%;transform:rotate(-25.8deg)">用户6350677773916: 37203914040044008</div>
<div class="t" style="left:495.7px;top:744.5px;font-size:13.5px;line-height:14px;color:rgba(60,60,60,.055);transform-origin:0 100%;transform:rotate(-25.8deg)">用户6350677773916: 37203914040044008</div>
<div class="t" style="left:495.7px;top:1244.5px;font-size:13.5px;line-height:14px;color:rgba(60,60,60,.055);transform-origin:0 100%;transform:rotate(-25.8deg)">用户6350677773916: 37203914040044008</div>
<div class="t" style="left:743.7px;top:-27px;font-size:13.5px;line-height:14px;color:rgba(60,60,60,.055);transform-origin:0 100%;transform:rotate(-25.8deg)">用户6350677773916: 37203914040044008</div>
<div class="t" style="left:743.7px;top:223px;font-size:13.5px;line-height:14px;color:rgba(60,60,60,.055);transform-origin:0 100%;transform:rotate(-25.8deg)">用户6350677773916: 37203914040044008</div>
<div class="t" style="left:743.7px;top:473px;font-size:13.5px;line-height:14px;color:rgba(60,60,60,.055);transform-origin:0 100%;transform:rotate(-25.8deg)">用户6350677773916: 37203914040044008</div>
<div class="t" style="left:743.7px;top:723px;font-size:13.5px;line-height:14px;color:rgba(60,60,60,.055);transform-origin:0 100%;transform:rotate(-25.8deg)">用户6350677773916: 37203914040044008</div>
<div class="t" style="left:743.7px;top:973px;font-size:13.5px;line-height:14px;color:rgba(60,60,60,.055);transform-origin:0 100%;transform:rotate(-25.8deg)">用户6350677773916: 37203914040044008</div>
<div class="t" style="left:743.7px;top:1223px;font-size:13.5px;line-height:14px;color:rgba(60,60,60,.055);transform-origin:0 100%;transform:rotate(-25.8deg)">用户6350677773916: 37203914040044008</div>
<div class="t" style="left:991.7px;top:236.2px;font-size:13.5px;line-height:14px;color:rgba(60,60,60,.055);transform-origin:0 100%;transform:rotate(-25.8deg)">用户6350677773916: 37203914040044008</div>
<div class="t" style="left:991.7px;top:736.2px;font-size:13.5px;line-height:14px;color:rgba(60,60,60,.055);transform-origin:0 100%;transform:rotate(-25.8deg)">用户6350677773916: 37203914040044008</div>
<div class="t" style="left:991.7px;top:1236.2px;font-size:13.5px;line-height:14px;color:rgba(60,60,60,.055);transform-origin:0 100%;transform:rotate(-25.8deg)">用户6350677773916: 37203914040044008</div>
<div class="t" style="left:1239.7px;top:245px;font-size:13.5px;line-height:14px;color:rgba(60,60,60,.055);transform-origin:0 100%;transform:rotate(-25.8deg)">用户6350677773916: 37203914040044008</div>
<div class="t" style="left:1239.7px;top:745px;font-size:13.5px;line-height:14px;color:rgba(60,60,60,.055);transform-origin:0 100%;transform:rotate(-25.8deg)">用户6350677773916: 37203914040044008</div>
<div class="t" style="left:1239.7px;top:1245px;font-size:13.5px;line-height:14px;color:rgba(60,60,60,.055);transform-origin:0 100%;transform:rotate(-25.8deg)">用户6350677773916: 37203914040044008</div>
<div class="t" style="left:1487.7px;top:-26px;font-size:13.5px;line-height:14px;color:rgba(60,60,60,.055);transform-origin:0 100%;transform:rotate(-25.8deg)">用户6350677773916: 37203914040044008</div>
<div class="t" style="left:1487.7px;top:224px;font-size:13.5px;line-height:14px;color:rgba(60,60,60,.055);transform-origin:0 100%;transform:rotate(-25.8deg)">用户6350677773916: 37203914040044008</div>
<div class="t" style="left:1487.7px;top:474px;font-size:13.5px;line-height:14px;color:rgba(60,60,60,.055);transform-origin:0 100%;transform:rotate(-25.8deg)">用户6350677773916: 37203914040044008</div>
<div class="t" style="left:1487.7px;top:724px;font-size:13.5px;line-height:14px;color:rgba(60,60,60,.055);transform-origin:0 100%;transform:rotate(-25.8deg)">用户6350677773916: 37203914040044008</div>
<div class="t" style="left:1487.7px;top:974px;font-size:13.5px;line-height:14px;color:rgba(60,60,60,.055);transform-origin:0 100%;transform:rotate(-25.8deg)">用户6350677773916: 37203914040044008</div>
<div class="t" style="left:1487.7px;top:1224px;font-size:13.5px;line-height:14px;color:rgba(60,60,60,.055);transform-origin:0 100%;transform:rotate(-25.8deg)">用户6350677773916: 37203914040044008</div>
<div class="t" style="left:1735.7px;top:234px;font-size:13.5px;line-height:14px;color:rgba(60,60,60,.055);transform-origin:0 100%;transform:rotate(-25.8deg)">用户6350677773916: 37203914040044008</div>
<div class="t" style="left:1735.7px;top:734px;font-size:13.5px;line-height:14px;color:rgba(60,60,60,.055);transform-origin:0 100%;transform:rotate(-25.8deg)">用户6350677773916: 37203914040044008</div>
<div class="t" style="left:1735.7px;top:1234px;font-size:13.5px;line-height:14px;color:rgba(60,60,60,.055);transform-origin:0 100%;transform:rotate(-25.8deg)">用户6350677773916: 37203914040044008</div>
<div class="t" style="left:1983.7px;top:236px;font-size:13.5px;line-height:14px;color:rgba(60,60,60,.055);transform-origin:0 100%;transform:rotate(-25.8deg)">用户6350677773916: 37203914040044008</div>
<div class="t" style="left:1983.7px;top:736px;font-size:13.5px;line-height:14px;color:rgba(60,60,60,.055);transform-origin:0 100%;transform:rotate(-25.8deg)">用户6350677773916: 37203914040044008</div>
<div class="t" style="left:1983.7px;top:1236px;font-size:13.5px;line-height:14px;color:rgba(60,60,60,.055);transform-origin:0 100%;transform:rotate(-25.8deg)">用户6350677773916: 37203914040044008</div>
</body></html>
